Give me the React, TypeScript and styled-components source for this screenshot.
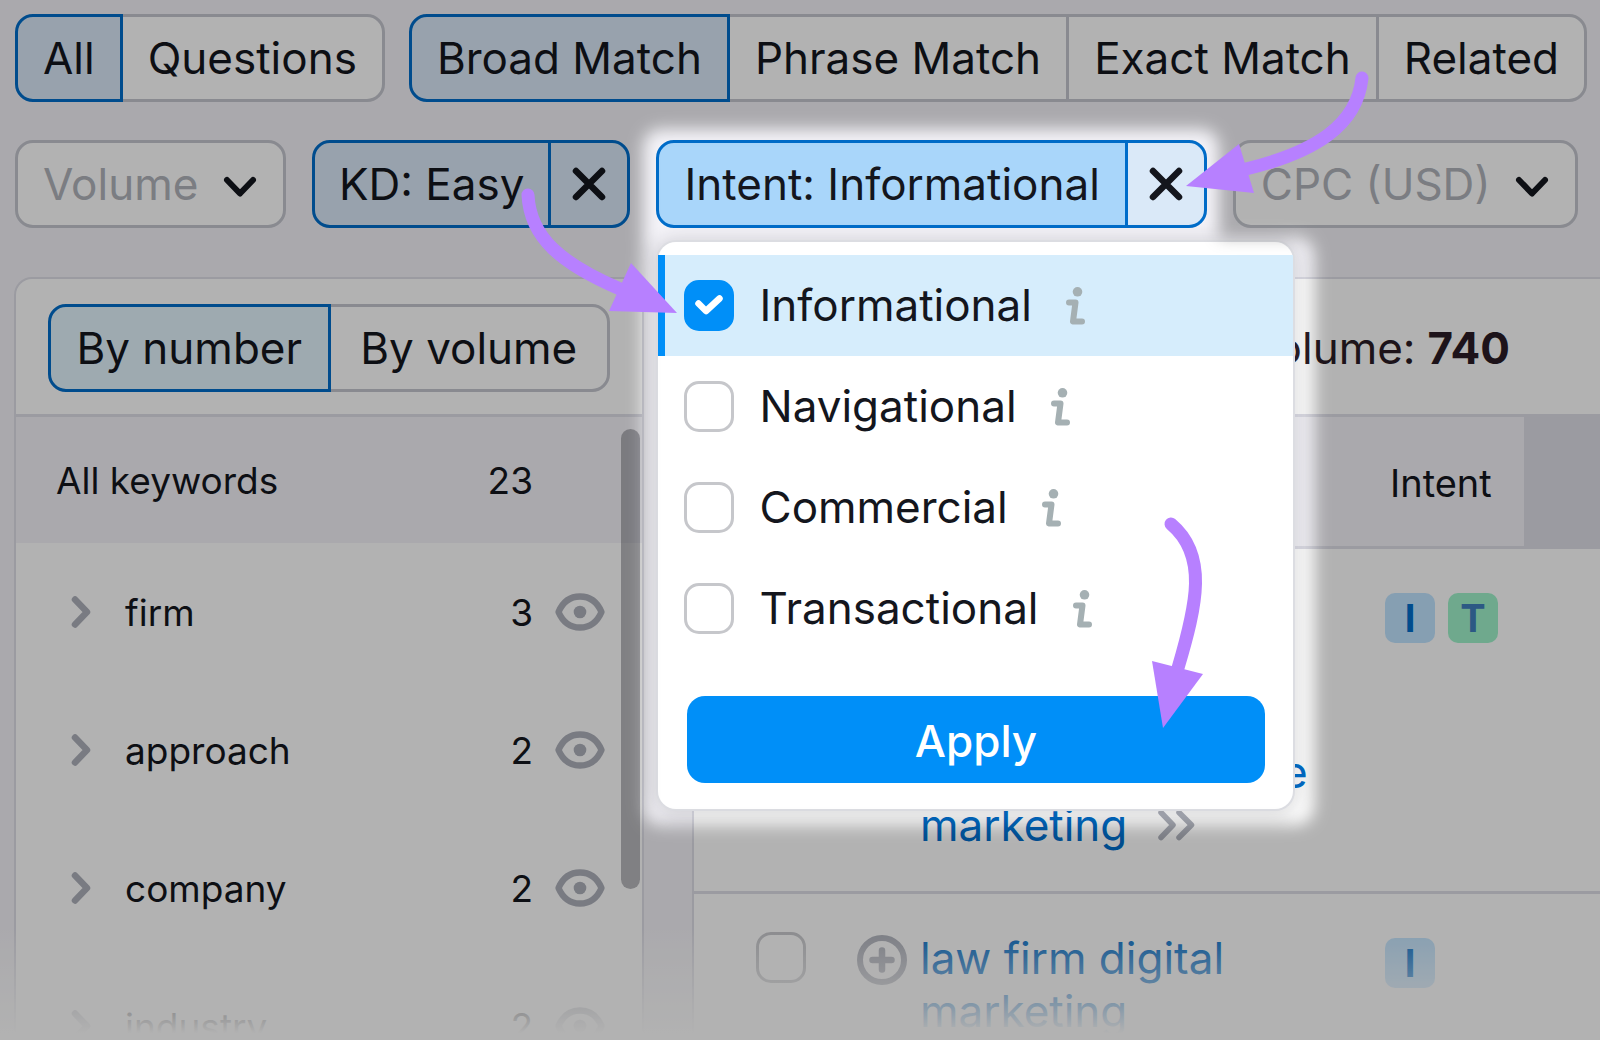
import React, { useState } from "react";
import styled, { createGlobalStyle, css } from "styled-components";

const color = {
  page: "#f4f3f8",
  text: "#14161d",
  muted: "#b0b3ba",
  icon: "#aeb1bb",
  line: "#dedee7",
  border: "#c4c6ce",
  blue: "#006dca",
  bright: "#008ff8",
  arrow: "#b780ff",
};

const GlobalStyle = createGlobalStyle`
  *, *::before, *::after { box-sizing: border-box; }
  body {
    margin: 0;
    background: ${color.page};
    color: ${color.text};
    font-family: Inter, "Liberation Sans", sans-serif;
    font-size: 44px;
    line-height: 53px;
  }
  button, input, select { font: inherit; color: inherit; margin: 0; }
`;

const Page = styled.div`
  position: relative;
  display: flex;
  flex-direction: column;
  height: 100vh;
  overflow: hidden;
  background: ${color.page};
`;

const FilterRow = styled.div`
  display: flex;
  gap: 24px;
  padding: 14px 14px 0 15px;
  & + & {
    gap: 26px;
    padding-top: 38px;
  }
`;

const Segments = styled.div<{ $fill?: boolean }>`
  display: flex;
  ${(p) =>
    p.$fill &&
    css`
      width: 100%;
      button {
        flex: 1;
      }
    `}
`;

const Segment = styled.button<{ $tint?: string }>`
  height: 88px;
  padding: 0 25px;
  border: 3px solid ${color.border};
  background: #fff;
  white-space: nowrap;
  cursor: pointer;
  & + & {
    margin-left: -3px;
  }
  &:first-child {
    border-radius: 18px 0 0 18px;
  }
  &:last-child {
    border-radius: 0 18px 18px 0;
  }
  &[aria-pressed="true"] {
    position: relative;
    border-color: ${color.blue};
    background: ${(p) => p.$tint ?? "#dae9f8"};
  }
`;

const DropdownBox = styled.div`
  position: relative;
  display: grid;
  svg {
    position: absolute;
    right: 29px;
    top: 36px;
    pointer-events: none;
  }
`;

const Dropdown = styled.select`
  height: 88px;
  padding: 0 84px 0 25px;
  border: 3px solid ${color.border};
  border-radius: 18px;
  background: #fff;
  color: ${color.muted};
  appearance: none;
`;

const ChipBox = styled.div`
  position: relative;
  display: flex;
`;

const chipPart = css`
  height: 88px;
  border: 3px solid ${color.blue};
  white-space: nowrap;
  cursor: pointer;
`;

const ChipLabel = styled.button<{ $open?: boolean }>`
  ${chipPart}
  padding: 0 ${(p) => (p.$open ? 25 : 24)}px;
  border-radius: 18px 0 0 18px;
  background: ${(p) => (p.$open ? "#a9d6fa" : "#dae9f8")};
`;

const ChipClose = styled.button`
  ${chipPart}
  display: grid;
  place-items: center;
  width: 82px;
  padding: 0;
  margin-left: -3px;
  border-radius: 0 18px 18px 0;
  background: #dae9f8;
`;

const Popup = styled.form`
  position: absolute;
  z-index: 2;
  top: 102px;
  left: 2px;
  width: 635px;
  padding: 13px 0 26px;
  border-radius: 18px;
  background: #fff;
  box-shadow: 0 0 0 2px #dcdde2, 0 2px 18px 6px rgba(25, 27, 35, 0.14);
`;

const Option = styled.label<{ $checked: boolean }>`
  display: flex;
  align-items: center;
  gap: 25px;
  height: 101px;
  padding-left: 19px;
  border-left: 7px solid ${(p) => (p.$checked ? color.bright : "transparent")};
  background: ${(p) => (p.$checked ? "#d6edfc" : "transparent")};
`;

const OptionName = styled.span`
  margin-right: 9px;
`;

const TickBox = styled.span`
  position: relative;
  display: grid;
  flex: none;
  svg {
    position: absolute;
    inset: 0;
    pointer-events: none;
  }
`;

const Tick = styled.input`
  width: 50px;
  height: 51px;
  border: 3px solid #c6c7cb;
  border-radius: 15px;
  background: #fff;
  appearance: none;
  &:checked {
    border-color: ${color.bright};
    background: ${color.bright};
  }
`;

const Apply = styled.button`
  display: block;
  width: calc(100% - 57px);
  height: 87px;
  margin: 37px auto 0;
  padding: 4px 0 0;
  border: 0;
  border-radius: 18px;
  background: ${color.bright};
  color: #fff;
  font-weight: 500;
`;

const Panels = styled.main`
  display: flex;
  flex: 1;
  gap: 48px;
  min-height: 0;
  padding: 49px 0 0 14px;
`;

const Sidebar = styled.aside`
  position: relative;
  flex: none;
  width: 630px;
  border: 2px solid ${color.line};
  border-bottom: 0;
  border-radius: 18px 18px 0 0;
  background: #fff;
`;

const SidebarHead = styled.div`
  display: flex;
  height: 138px;
  padding: 25px 32px 0;
  border-bottom: 3px solid ${color.line};
`;

const Groups = styled.ul`
  margin: 0;
  padding: 0;
  list-style: none;
  font-size: 37px;
`;

const Group = styled.li<{ $all?: boolean }>`
  display: flex;
  align-items: center;
  height: ${(p) => (p.$all ? 126 : 138)}px;
  padding: 0 37px 0 ${(p) => (p.$all ? 40 : 55)}px;
  background: ${(p) => (p.$all ? color.page : "#fff")};
`;

const GroupName = styled.span`
  flex: 1;
`;

const Expand = styled.button`
  display: grid;
  width: 54px;
  padding: 0;
  border: 0;
  background: none;
`;

const Watch = styled.button`
  display: grid;
  width: 50px;
  padding: 0;
  margin-left: 22px;
  border: 0;
  background: none;
`;

const EyeSpace = styled.span`
  width: 72px;
`;

const ScrollThumb = styled.div`
  position: absolute;
  top: 150px;
  right: 2px;
  width: 19px;
  height: 460px;
  border-radius: 10px;
  background: rgba(25, 27, 40, 0.31);
`;

const Results = styled.section`
  flex: 1;
  min-width: 0;
  border-top: 2px solid ${color.line};
  border-left: 2px solid ${color.line};
  border-radius: 18px 0 0;
  background: #fff;
`;

const ResultsHead = styled.div`
  display: flex;
  align-items: center;
  justify-content: flex-end;
  gap: 12px;
  height: 138px;
  padding: 4px 90px 0 0;
  border-bottom: 3px solid ${color.line};
  color: #2a1c26;
`;

const Table = styled.table`
  width: 100%;
  table-layout: fixed;
  border-collapse: separate;
  border-spacing: 0;
`;

const HeadCell = styled.th<{ $w?: number; $dark?: boolean }>`
  width: ${(p) => (p.$w ? p.$w + "px" : "auto")};
  height: 132px;
  padding: 4px 0 0 50px;
  border-bottom: 3px solid ${color.line};
  background: ${(p) => (p.$dark ? color.line : color.page)};
  font-size: 38px;
  font-weight: 400;
  text-align: left;
`;

const Cell = styled.td<{ $pad?: number; $top?: number }>`
  padding: ${(p) => p.$top ?? 38}px 0 39px ${(p) => p.$pad ?? 0}px;
  border-bottom: 3px solid ${color.line};
  vertical-align: top;
`;

const KeywordBox = styled.div`
  display: flex;
  gap: 13px;
`;

const Add = styled.button`
  display: grid;
  flex: none;
  height: 56px;
  padding: 3px 0;
  border: 0;
  background: none;
`;

const Keyword = styled.a`
  color: ${color.blue};
  text-decoration: none;
  white-space: pre-line;
  svg {
    margin-left: 30px;
  }
`;

const Badges = styled.div`
  display: flex;
  gap: 13px;
`;

const Badge = styled.span<{ $kind: string }>`
  display: grid;
  place-items: center;
  width: 50px;
  height: 50px;
  border-radius: 10px;
  background: ${(p) => (p.$kind === "T" ? "#9ff3cb" : "#c0e4ff")};
  color: ${(p) => (p.$kind === "T" ? "#3f80bd" : color.blue)};
  font-size: 38px;
  font-weight: 700;
  line-height: 50px;
`;

const BottomFade = styled.div`
  position: absolute;
  z-index: 1;
  right: 0;
  bottom: 0;
  left: 0;
  height: 115px;
  background: linear-gradient(rgba(255, 255, 255, 0), #fff 94%);
  pointer-events: none;
`;

const Layer = styled.svg`
  position: absolute;
  z-index: 3;
  top: 0;
  left: 0;
  width: 100%;
  height: 100%;
  pointer-events: none;
`;

const Down = () => (
  <svg width="34" height="22" viewBox="0 0 34 22" fill="none" stroke={color.text} strokeWidth="6" strokeLinecap="round" strokeLinejoin="round">
    <path d="M4 4 L17 17.5 L30 4" />
  </svg>
);

const Cross = () => (
  <svg width="34" height="34" viewBox="0 0 34 34" fill="none" stroke={color.text} strokeWidth="6.5" strokeLinecap="round">
    <path d="M4 4 L30 30 M30 4 L4 30" />
  </svg>
);

const Chevron = () => (
  <svg width="22" height="34" viewBox="0 0 22 34" fill="none" stroke={color.icon} strokeWidth="6.5" strokeLinecap="round" strokeLinejoin="round">
    <path d="M4 4.5 L16 17 L4 29.5" />
  </svg>
);

const DoubleChevron = () => (
  <svg width="40" height="32" viewBox="0 0 40 32" fill="none" stroke={color.icon} strokeWidth="5.5" strokeLinecap="round" strokeLinejoin="round">
    <path d="M4 3.5 L16 16 L4 28.5 M22 3.5 L34.5 16 L22 28.5" />
  </svg>
);

const Eye = () => (
  <svg width="50" height="38" viewBox="0 0 50 38" fill="none">
    <path d="M3.5 19 C8 8.5 15.5 3.5 25 3.5 S42 8.5 46.5 19 C42 29.5 34.5 34.5 25 34.5 S8 29.5 3.5 19 Z" stroke={color.icon} strokeWidth="6.3" strokeLinejoin="round" />
    <circle cx="25" cy="19" r="6.3" fill={color.icon} />
  </svg>
);

const Info = () => (
  <svg width="20" height="38" viewBox="0 0 20 38" fill="none">
    <circle cx="11.5" cy="4.8" r="4.8" fill="#a5b0b3" />
    <path d="M3 15.5 H9.5 L7 34.5 H16" stroke="#a5b0b3" strokeWidth="6" strokeLinecap="round" strokeLinejoin="round" />
  </svg>
);

const Plus = () => (
  <svg width="50" height="50" viewBox="0 0 50 50" fill="none" stroke={color.icon} strokeLinecap="round">
    <circle cx="25" cy="25" r="22" strokeWidth="6" />
    <path d="M25 15.5 V34.5 M15.5 25 H34.5" strokeWidth="6.5" />
  </svg>
);

const CheckMark = () => (
  <svg width="50" height="50" viewBox="0 0 50 50" fill="none" stroke="#fff" strokeWidth="6.5" strokeLinecap="round" strokeLinejoin="round">
    <path d="M14.5 23.5 L22 31 L35.5 18.5" />
  </svg>
);

function Switcher({ items, tint, label, fill }: { items: string[]; tint?: string; label: string; fill?: boolean }) {
  const [active, setActive] = useState(items[0]);
  return (
    <Segments role="group" aria-label={label} $fill={fill}>
      {items.map((item) => (
        <Segment key={item} type="button" $tint={tint} aria-pressed={item === active} onClick={() => setActive(item)}>
          {item}
        </Segment>
      ))}
    </Segments>
  );
}

function Filter({ name }: { name: string }) {
  return (
    <DropdownBox>
      <Dropdown aria-label={name} defaultValue={name}>
        <option>{name}</option>
      </Dropdown>
      <Down />
    </DropdownBox>
  );
}

const intents = ["Informational", "Navigational", "Commercial", "Transactional"];

function IntentPopup() {
  const [checked, setChecked] = useState<string[]>(["Informational"]);
  const toggle = (name: string) =>
    setChecked((old) => (old.includes(name) ? old.filter((n) => n !== name) : [...old, name]));
  return (
    <Popup onSubmit={(e) => e.preventDefault()}>
      {intents.map((name) => (
        <Option key={name} $checked={checked.includes(name)}>
          <TickBox>
            <Tick type="checkbox" checked={checked.includes(name)} onChange={() => toggle(name)} />
            {checked.includes(name) && <CheckMark />}
          </TickBox>
          <OptionName>{name}</OptionName>
          <Info />
        </Option>
      ))}
      <Apply type="submit">Apply</Apply>
    </Popup>
  );
}

const groups = [
  { name: "firm", count: 3 },
  { name: "approach", count: 2 },
  { name: "company", count: 2 },
  { name: "industry", count: 2 },
];

const keywords = [
  { text: "which approach\nis good for\nclient services\nlaw firm and office\nmarketing", kinds: ["I", "T"], more: true },
  { text: "law firm digital\nmarketing", kinds: ["I"], more: false },
];

function Spotlight() {
  return (
    <Layer aria-hidden="true">
      <defs>
        <filter id="soften" x="-10%" y="-10%" width="120%" height="120%">
          <feGaussianBlur stdDeviation="8" />
        </filter>
        <mask id="spot" maskUnits="userSpaceOnUse" x="0" y="0" width="100%" height="100%">
          <rect width="100%" height="100%" fill="#fff" />
          <g filter="url(#soften)">
            <rect x="643" y="129" width="576" height="130" rx="18" />
            <rect x="643" y="237" width="671" height="588" rx="18" />
          </g>
        </mask>
      </defs>
      <rect width="100%" height="100%" fill="#000" fillOpacity="0.3" mask="url(#spot)" />
    </Layer>
  );
}

function Arrows() {
  return (
    <Layer aria-hidden="true" fill="none" stroke={color.arrow} strokeWidth="13" strokeLinecap="round">
      <path d="M528 195 C530 238 562 264 620 289" />
      <path d="M631 263 L609 311 L677 313 Z" fill={color.arrow} stroke="none" />
      <path d="M1362 78 C1357 125 1316 152 1246 169" />
      <path d="M1239 144 L1254 193 L1186 186 Z" fill={color.arrow} stroke="none" />
      <path d="M1171 524 C1208 555 1197 604 1178 668" />
      <path d="M1152 661 L1203 674 L1163 728 Z" fill={color.arrow} stroke="none" />
    </Layer>
  );
}

export default function App() {
  return (
    <Page>
      <GlobalStyle />
      <FilterRow>
        <Switcher label="Keyword kind" items={["All", "Questions"]} />
        <Switcher label="Match type" items={["Broad Match", "Phrase Match", "Exact Match", "Related"]} />
      </FilterRow>
      <FilterRow>
        <Filter name="Volume" />
        <ChipBox>
          <ChipLabel type="button">KD: Easy</ChipLabel>
          <ChipClose type="button" aria-label="Clear KD">
            <Cross />
          </ChipClose>
        </ChipBox>
        <ChipBox>
          <ChipLabel type="button" $open>
            Intent: Informational
          </ChipLabel>
          <ChipClose type="button" aria-label="Clear intent">
            <Cross />
          </ChipClose>
          <IntentPopup />
        </ChipBox>
        <Filter name="CPC (USD)" />
      </FilterRow>

      <Panels>
        <Sidebar>
          <SidebarHead>
            <Switcher fill label="Group order" tint="#e3f4fd" items={["By number", "By volume"]} />
          </SidebarHead>
          <Groups>
            <Group $all>
              <GroupName>All keywords</GroupName>
              23
              <EyeSpace />
            </Group>
            {groups.map((g) => (
              <Group key={g.name}>
                <Expand type="button" aria-label={"Expand " + g.name}>
                  <Chevron />
                </Expand>
                <GroupName>{g.name}</GroupName>
                {g.count}
                <Watch type="button" aria-label={"Hide " + g.name}>
                  <Eye />
                </Watch>
              </Group>
            ))}
          </Groups>
          <ScrollThumb />
        </Sidebar>

        <Results>
          <ResultsHead>
            <span>Volume:</span>
            <strong>740</strong>
          </ResultsHead>
          <Table>
            <thead>
              <tr>
                <HeadCell $w={142} aria-label="Selected" />
                <HeadCell aria-label="Keyword" />
                <HeadCell $w={184}>Intent</HeadCell>
                <HeadCell $w={76} $dark />
              </tr>
            </thead>
            <tbody>
              {keywords.map((k) => (
                <tr key={k.text}>
                  <Cell $pad={62}>
                    <TickBox>
                      <Tick type="checkbox" aria-label={"Select " + k.text} />
                    </TickBox>
                  </Cell>
                  <Cell $pad={21}>
                    <KeywordBox>
                      <Add type="button" aria-label={"Add " + k.text}>
                        <Plus />
                      </Add>
                      <Keyword href="#">
                        {k.text}
                        {k.more && <DoubleChevron />}
                      </Keyword>
                    </KeywordBox>
                  </Cell>
                  <Cell $pad={45} $top={44}>
                    <Badges>
                      {k.kinds.map((kind) => (
                        <Badge key={kind} $kind={kind}>
                          {kind}
                        </Badge>
                      ))}
                    </Badges>
                  </Cell>
                  <Cell />
                </tr>
              ))}
            </tbody>
          </Table>
        </Results>
      </Panels>
      <BottomFade />
      <Spotlight />
      <Arrows />
    </Page>
  );
}
